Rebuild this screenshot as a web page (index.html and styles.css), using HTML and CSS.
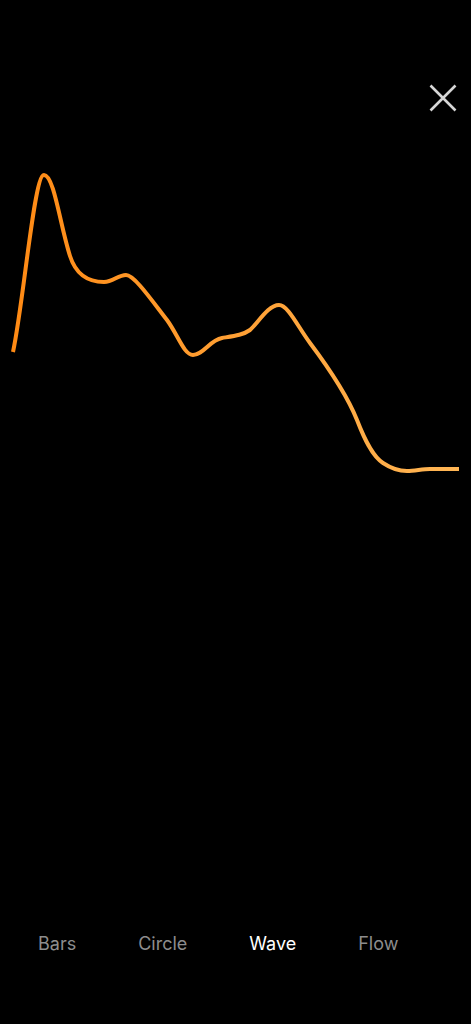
FILE: index.html
```html
<!DOCTYPE html>
<html lang="en">
<head>
<meta charset="utf-8">
<title>Wave</title>
<link rel="stylesheet" href="styles.css">
</head>
<body>
<div class="screen">
  <header class="topbar">
    <button class="close" aria-label="Close">
      <svg viewBox="0 0 28 28" width="28" height="28">
        <path d="M1.5 1.5 L26.5 26.5 M26.5 1.5 L1.5 26.5" stroke="#d6d6d6" stroke-width="2.6" stroke-linecap="butt" fill="none"/>
      </svg>
    </button>
  </header>
  <main class="chart">
    <svg class="wave" viewBox="0 150 471 340" width="471" height="340">
      <defs>
        <linearGradient id="g" gradientUnits="userSpaceOnUse" x1="13" y1="0" x2="459" y2="0">
          <stop offset="0" stop-color="#ff8a14"/>
          <stop offset="1" stop-color="#ffb655"/>
        </linearGradient>
      </defs>
      <path d="M13,352 C24,300 34,175 44,175 C54,175 60,225 70,256 C77,278 92,282 104,282 C113,282 118,275 126,275 C134,275 150,298 167,320 C178,335 184,355 193,355 C203,355 210,340 222,338 C234,336 243,335 250,330 C258,323 268,305 279,305 C288,305 298,327 310,343 C322,359 345,390 357,420 C364,438 372,456 383,463 C392,469 400,471 407,471 C415,471 422,469 430,469 L459,469" fill="none" stroke="url(#g)" stroke-width="4"/>
    </svg>
  </main>
  <nav class="tabs">
    <span class="tab">Bars</span>
    <span class="tab">Circle</span>
    <span class="tab active">Wave</span>
    <span class="tab">Flow</span>
  </nav>
</div>
</body>
</html>
```
FILE: styles.css
```css
html, body {
  margin: 0;
  padding: 0;
  background: #000;
}
.screen {
  width: 471px;
  height: 1024px;
  display: flex;
  flex-direction: column;
  background: #000;
  font-family: Inter, "Liberation Sans", sans-serif;
}
.topbar {
  display: flex;
  justify-content: flex-end;
  padding: 84px 14px 0 0;
}
.close {
  width: 28px;
  height: 28px;
  padding: 0;
  border: 0;
  background: none;
  display: block;
}
.close svg {
  display: block;
}
.chart {
  margin-top: 38px;
  flex: 1;
}
.wave {
  display: block;
}
.tabs {
  display: flex;
  gap: 62px;
  padding: 0 0 69px 38px;
  height: 22px;
  align-items: center;
}
.tab {
  font-size: 18px;
  line-height: 22px;
  color: #8d8d8d;
}
.tab.active {
  color: #ffffff;
}
```
